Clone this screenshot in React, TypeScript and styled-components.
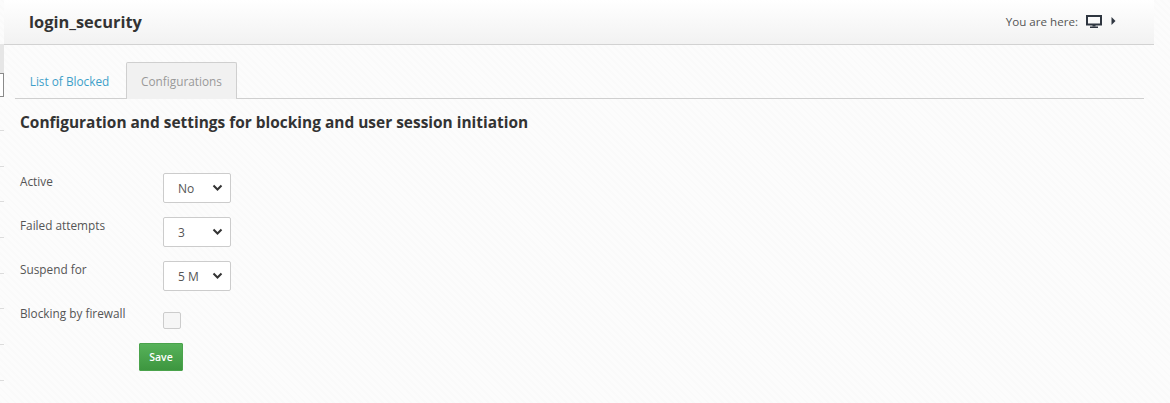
import * as React from "react";
import styled, { createGlobalStyle } from "styled-components";

const GlobalStyle = createGlobalStyle`
  html, body {
    margin: 0;
    padding: 0;
    height: 403px;
    overflow: hidden;
    background-color: #fcfcfc;
    background-image: repeating-linear-gradient(45deg, rgba(0, 0, 0, 0.006) 0 2px, transparent 2px 5px);
  }
  body {
    font-family: "Open Sans", "Noto Sans", sans-serif;
    font-size: 12px;
    color: #444;
  }
`;

const Page = styled.div`
  display: flex;
  width: 1170px;
  height: 403px;
  overflow: hidden;
`;

// what is left visible of the collapsed side menu
const SideStub = styled.div`
  width: 4px;
  flex: none;
  padding-top: 44px;
`;

const StubSearch = styled.div`
  height: 29px;
  background: #e6e6e6;
`;

const StubInput = styled.div`
  box-sizing: border-box;
  height: 24px;
  background: #fff;
  border: 1px solid #8a8a8a;
  border-left: none;
  margin-bottom: 33px;
`;

const StubItem = styled.div`
  box-sizing: border-box;
  height: 35.7px;
  border-top: 1px solid #dcdcdc;
`;

const Main = styled.main`
  width: 1150px;
  flex: none;
`;

const Header = styled.header`
  box-sizing: border-box;
  height: 45px;
  padding: 0 38px 2px 25px;
  display: flex;
  align-items: center;
  justify-content: space-between;
  background: linear-gradient(#ffffff, #f2f2f2);
  border-bottom: 1px solid #d2d2d2;
`;

const Title = styled.h1`
  margin: 0;
  font-size: 16.4px;
  font-weight: 700;
  color: #333;
`;

const Crumbs = styled.div`
  display: flex;
  align-items: center;
  gap: 8px;
  font-size: 11.6px;
  color: #555;
`;

const CrumbArrow = styled.svg`
  margin-left: 1px;
`;

const Content = styled.div`
  padding: 17px 10px 0 11px;
`;

const Tabs = styled.nav`
  display: flex;
  height: 37px;
  box-sizing: border-box;
  border-bottom: 1px solid #cfcfcf;
`;

const Tab = styled.a<{ $active?: boolean }>`
  display: flex;
  align-items: center;
  justify-content: center;
  box-sizing: border-box;
  height: 37px;
  width: 111px;
  padding-right: ${({ $active }) => ($active ? "0" : "2px")};
  font-size: 11.8px;
  color: ${({ $active }) => ($active ? "#999" : "#3e9fc9")};
  background: ${({ $active }) => ($active ? "#f1f1f1" : "transparent")};
  border: 1px solid ${({ $active }) => ($active ? "#cfcfcf" : "transparent")};
  border-bottom: none;
  border-radius: 2px 2px 0 0;
`;

const Heading = styled.h2`
  margin: 13px 0 39px 5px;
  font-size: 15.45px;
  font-weight: 700;
  line-height: 20px;
  color: #333;
`;

const Row = styled.div<{ $h?: number }>`
  display: flex;
  height: ${({ $h }) => $h ?? 44}px;
  padding-left: 5px;
`;

const Label = styled.label`
  width: 143px;
  flex: none;
  font-size: 11.8px;
  line-height: 16px;
  padding-top: 2px;
  color: #555;
`;

const SelectBox = styled.div`
  position: relative;
  top: 2px;
  box-sizing: border-box;
  width: 68px;
  height: 30px;
  display: flex;
  align-items: center;
  padding-left: 14px;
  font-size: 12px;
  color: #555;
  background: #fff;
  border: 1px solid #ccc;
  border-radius: 2px;
`;

const Chevron = styled.svg`
  position: absolute;
  right: 7px;
  top: 10px;
  width: 11px;
  height: 8px;
`;

const CheckBox = styled.span`
  display: block;
  box-sizing: border-box;
  width: 18px;
  height: 17px;
  margin-top: 9px;
  background: #f6f6f6;
  border: 1px solid #ccc;
  border-radius: 2px;
`;

const SaveButton = styled.button`
  display: block;
  width: 44px;
  height: 28px;
  margin: 0 0 0 124px;
  padding: 0;
  font: 600 10.5px "Open Sans", sans-serif;
  color: #fff;
  background: linear-gradient(#57b25a, #3d963f);
  border: 1px solid #4aa34c;
  border-radius: 1px;
`;

const rows = [
  { label: "Active", value: "No" },
  { label: "Failed attempts", value: "3" },
  { label: "Suspend for", value: "5 M" },
];

export default function App() {
  return (
    <Page>
      <GlobalStyle />
      <SideStub>
        <StubSearch />
        <StubInput />
        {Array.from({ length: 8 }).map((_, i) => (
          <StubItem key={i} />
        ))}
      </SideStub>
      <Main>
        <Header>
          <Title>login_security</Title>
          <Crumbs>
            You are here:
            <svg width="16" height="13" viewBox="0 0 16 13" aria-hidden="true">
              <rect x="1" y="1" width="14" height="8.5" fill="none" stroke="#2f3640" strokeWidth="2" />
              <rect x="6.5" y="10" width="3" height="1.5" fill="#2f3640" />
              <rect x="4" y="11.5" width="8" height="1.5" fill="#2f3640" />
            </svg>
            <CrumbArrow width="5" height="8" viewBox="0 0 5 8" aria-hidden="true">
              <path d="M0.5 0 L4.5 4 L0.5 8 Z" fill="#2f3640" />
            </CrumbArrow>
          </Crumbs>
        </Header>
        <Content>
          <Tabs>
            <Tab>List of Blocked</Tab>
            <Tab $active>Configurations</Tab>
          </Tabs>
          <Heading>Configuration and settings for blocking and user session initiation</Heading>
          {rows.map((r) => (
            <Row key={r.label}>
              <Label>{r.label}</Label>
              <SelectBox>
                {r.value}
                <Chevron viewBox="0 0 11 8">
                  <path d="M1.5 1.5 L5.5 5.5 L9.5 1.5" fill="none" stroke="#333" strokeWidth="2" />
                </Chevron>
              </SelectBox>
            </Row>
          ))}
          <Row $h={40}>
            <Label>Blocking by firewall</Label>
            <CheckBox />
          </Row>
          <SaveButton>Save</SaveButton>
        </Content>
      </Main>
    </Page>
  );
}
